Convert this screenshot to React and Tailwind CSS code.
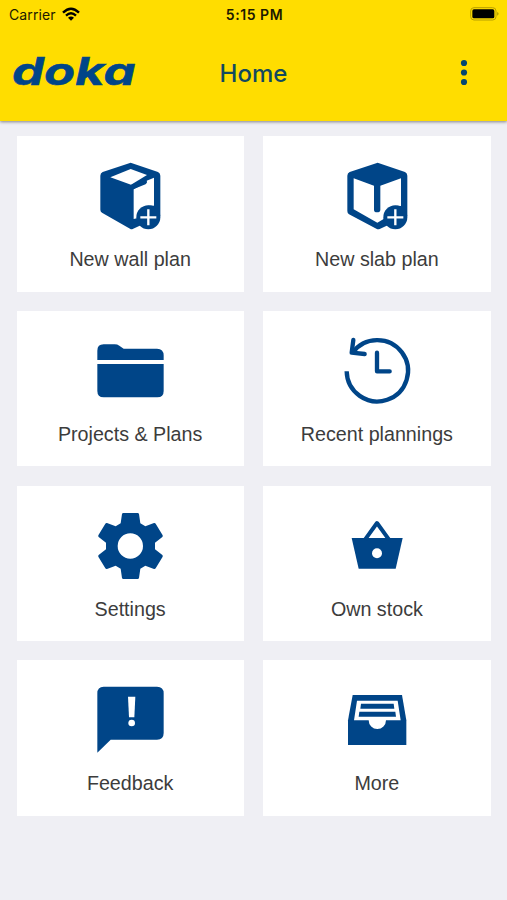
import React from 'react';

const WallIcon = () => (
  <svg viewBox="0 1 300 270" className="w-[100px] h-[90px]" fill="#004588">
    <path d="M152 39 L234 67 Q241 70 241 78 V200 L158 238 Q154 240 150 237 L66 189 Q61 186 61 180 V78 Q61 70 68 67 Z" />
    <path d="M91 83 L152 58 L201 76 L153 105 Z" fill="#fff" />
    <path d="M161 119 L195 100 L200 93 L222 84 V168 Q176 164 171 206 L161 208 Z" fill="#fff" />
    <path d="M157 112 L194 97" stroke="#004588" strokeWidth="14" strokeLinecap="round" />
    <circle cx="205" cy="203" r="36" />
    <path d="M181 203 H229 M205 179 V227" stroke="#fff" strokeWidth="7" />
  </svg>
);

const SlabIcon = () => (
  <svg viewBox="0 1 300 270" className="w-[100px] h-[90px]" fill="#004588">
    <path d="M152 39 L234 67 Q241 70 241 78 V200 L158 238 Q153 240 148 237 L66 194 Q61 191 61 184 V78 Q61 70 68 67 Z" />
    <path d="M80 86 L141 108 V180 Q141 188 150 188 Q160 188 160 180 V108 L222 86 V169 Q176 164 170 208 L151 219 L80 179 Z" fill="#fff" />
    <circle cx="205" cy="203" r="36" />
    <path d="M181 203 H229 M205 179 V227" stroke="#fff" strokeWidth="7" />
  </svg>
);

const FolderIcon = () => (
  <svg viewBox="0 -15 300 270" className="w-[100px] h-[90px]" fill="#004588">
    <path d="M52 90 V62 Q52 43 71 43 H104 Q112 43 118 47 L131 56 H231 Q251 57 251 76 V90 Z" />
    <path d="M52 102 H251 V183 Q251 202 232 202 H71 Q52 202 52 183 Z" />
  </svg>
);

const RecentIcon = () => (
  <svg
    viewBox="1 0 300 270"
    className="w-[100px] h-[90px]"
    fill="none"
    stroke="#004588"
    strokeWidth="13"
    strokeLinecap="round"
    strokeLinejoin="round"
  >
    <path d="M60 139 A92 92 0 1 0 77 84" strokeLinecap="butt" />
    <path d="M80 45 L75 83 L114 87" />
    <path d="M151 83 V139 H189" />
  </svg>
);

const SettingsIcon = () => (
  <svg viewBox="0 -1 300 270" className="w-[100px] h-[90px]">
    <path
      fill="#004588"
      fillRule="evenodd"
      d="M130 38 H173 Q176 38 177 41 L181 69 L196 78 L222 68 Q225 67 227 70 L248 105 Q249 108 247 110 L225 127 V147 L247 164 Q249 166 248 169 L227 204 Q225 207 222 206 L196 196 L181 205 L177 233 Q176 236 173 236 H130 Q127 236 126 233 L122 205 L107 196 L81 206 Q78 207 76 204 L55 169 Q54 166 56 164 L78 147 V127 L56 110 Q54 108 55 105 L76 70 Q78 67 81 68 L107 78 L122 69 L126 41 Q127 38 130 38 Z M151 99 A38 38 0 1 0 151 175 A38 38 0 1 0 151 99 Z"
    />
  </svg>
);

const StockIcon = () => (
  <svg viewBox="1 -16 300 270" className="w-[100px] h-[90px]" fill="#004588">
    <path d="M75 98 H228 L207 190 H96 Z" />
    <path d="M115 103 L151 53 L187 103" fill="none" stroke="#004588" strokeWidth="12" strokeLinejoin="round" />
    <circle cx="151" cy="144" r="15" fill="#fff" />
  </svg>
);

const FeedbackIcon = () => (
  <svg viewBox="0 -2 300 270" className="w-[100px] h-[90px]" fill="#004588">
    <path d="M71 36 H231 Q251 36 251 56 V175 Q251 195 231 195 H92 L52 234 V56 Q52 36 71 36 Z" />
    <path d="M144 66 H166 L163 128 H147 Z" fill="#fff" />
    <circle cx="155" cy="145" r="10" fill="#fff" />
  </svg>
);

const MoreIcon = () => (
  <svg viewBox="1 -17 300 270" className="w-[100px] h-[90px]" fill="#004588">
    <path d="M78 46 H226 L239 122 V196 H64 V122 Z" />
    <path d="M91 63 H213 L222 122 H178 A26 26 0 0 1 126 122 H82 Z" fill="#fff" />
    <path d="M103 72 H201 L203 87 H101 Z M98 96 H206 L208 111 H96 Z" />
  </svg>
);

const tiles = [
  { label: 'New wall plan', Icon: WallIcon },
  { label: 'New slab plan', Icon: SlabIcon },
  { label: 'Projects & Plans', Icon: FolderIcon },
  { label: 'Recent plannings', Icon: RecentIcon },
  { label: 'Settings', Icon: SettingsIcon },
  { label: 'Own stock', Icon: StockIcon },
  { label: 'Feedback', Icon: FeedbackIcon },
  { label: 'More', Icon: MoreIcon },
];

const StatusBar = () => (
  <div className="grid grid-cols-[1fr_auto_1fr] items-center h-7 pl-[9px] pr-[7px] text-[14px] text-[#1c1900]">
    <div className="flex items-center gap-1.5">
      <span className="tracking-[0.1px]">Carrier</span>
      <svg viewBox="0 0 54 42" className="w-[18px] h-[14px]" fill="none" stroke="#000" strokeWidth="7">
        <path d="M3 17 Q27 -7 51 17" />
        <path d="M12 26 Q27 12 42 26" />
        <path d="M18 32 Q27 25 36 32 L27 41 Z" fill="#000" stroke="none" />
      </svg>
    </div>
    <span className="text-center font-semibold tracking-[0.55px]">5:15 PM</span>
    <svg viewBox="0 0 90 42" className="w-[30px] h-[14px] justify-self-end">
      <rect x="2" y="2" width="76" height="37" rx="10" fill="none" stroke="#b89f00" strokeWidth="3" />
      <rect x="7" y="7" width="66" height="27" rx="5" fill="#000" />
      <path d="M82 15 Q89 20 82 26 Z" fill="#9d8900" />
    </svg>
  </div>
);

const Header = () => (
  <header className="h-[121px] bg-[#ffdd00] shadow-[0_1px_3px_rgba(0,0,0,0.45)]">
    <StatusBar />
    <div className="grid grid-cols-[1fr_auto_1fr] items-center h-[90px] px-[11px]">
      <svg viewBox="0 0 128 60" className="w-[128px] h-[60px]" aria-label="doka">
        <text
          x="1"
          y="42"
          textLength="123.5"
          lengthAdjust="spacingAndGlyphs"
          fill="#004588"
          stroke="#004588"
          strokeWidth="0.5"
          className="font-['Inter',sans-serif] text-[38px] font-bold italic"
        >
          doka
        </text>
      </svg>
      <h1 className="pt-px text-center text-[24px] font-medium leading-[30px] text-[#12495f]">Home</h1>
      <svg viewBox="0 0 14 30" className="w-[14px] h-[30px] mr-[25.5px] justify-self-end" fill="#04466f">
        <circle cx="7" cy="5" r="3.1" />
        <circle cx="7" cy="14.5" r="3.1" />
        <circle cx="7" cy="24" r="3.1" />
      </svg>
    </div>
  </header>
);

const App = () => {
  return (
    <div className="h-[900px] w-[507px] overflow-hidden bg-[#efeff4] font-['Inter',sans-serif]">
      <Header />
      <main className="grid grid-cols-2 gap-x-[19.5px] gap-y-[19.2px] px-[16.5px] pt-[15.3px]">
        {tiles.map(({ label, Icon }) => (
          <button key={label} className="flex flex-col items-center h-[155.5px] pt-[14px] bg-white">
            <Icon />
            <span className="mt-[3.9px] font-['Liberation_Sans',sans-serif] text-[19.7px] leading-[30px] text-[#3c3c3c]">
              {label}
            </span>
          </button>
        ))}
      </main>
    </div>
  );
};

export default App;
